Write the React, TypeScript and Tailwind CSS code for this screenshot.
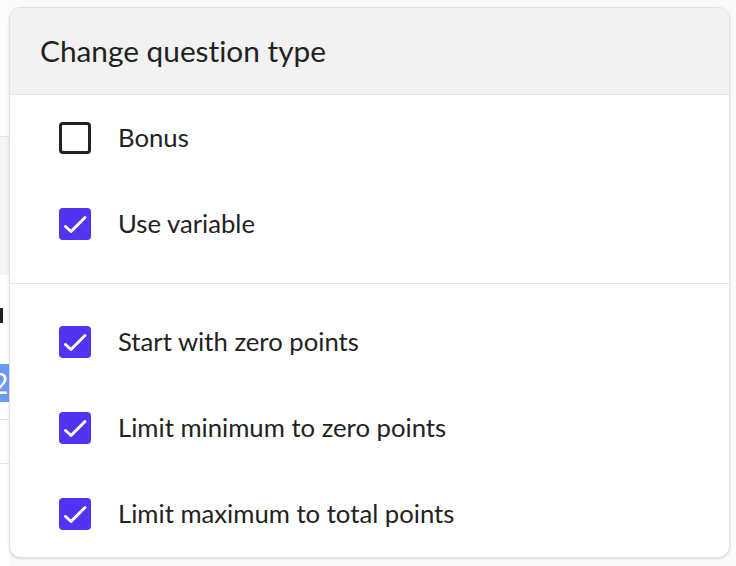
const options = [
  { label: "Bonus", checked: false },
  { label: "Use variable", checked: true },
];

const scoring = [
  { label: "Start with zero points", checked: true },
  { label: "Limit minimum to zero points", checked: true },
  { label: "Limit maximum to total points", checked: true },
];

function Checkbox({ checked }: { checked: boolean }) {
  if (!checked) {
    return <span className="w-8 h-8 shrink-0 rounded-[4px] border-[3px] border-[#222222] bg-white" />;
  }
  return (
    <span className="w-8 h-8 shrink-0 rounded-[4px] bg-[#5233f2] flex items-center justify-center">
      <svg width="32" height="32" viewBox="0 0 32 32" fill="none">
        <path d="M6.5 18.5L12 23.5L26 9.5" stroke="white" strokeWidth="3" strokeLinecap="round" strokeLinejoin="round" />
      </svg>
    </span>
  );
}

function Row({ label, checked }: { label: string; checked: boolean }) {
  return (
    <div className="h-[86px] flex items-center gap-[27px] pl-[49px]">
      <Checkbox checked={checked} />
      <span className="text-[25.7px] text-[#222222] leading-none">{label}</span>
    </div>
  );
}

export default function App() {
  return (
    <div className="w-[736px] h-[566px] bg-[#fafafa] flex overflow-hidden font-['Lato','Noto_Sans',sans-serif] [font-variant-ligatures:none]">
      {/* page peeking out behind the popover */}
      <div className="w-[9px] shrink-0 flex flex-col">
        <div className="h-[137px] bg-[#fcfcfc] border-b border-[#e4e4e4]" />
        <div className="h-[138px] bg-[#f4f4f4]" />
        <div className="h-[32px] bg-white" />
        <div className="h-[16px] bg-white flex items-center">
          <span className="w-[3px] h-[15px] bg-[#222222]" />
        </div>
        <div className="h-[41px] bg-white" />
        <div className="h-[38px] bg-[#6b9bf5] text-white text-[28px] leading-[38px] -indent-[8px]">2</div>
        <div className="h-[18px] bg-white border-b border-[#e4e4e4]" />
        <div className="h-[44px] bg-white border-b border-[#e4e4e4]" />
        <div className="flex-1 bg-white" />
      </div>

      <div className="mt-[7px] w-[721px] h-[551px] shrink-0 rounded-[12px] border border-[#e2e2e2] bg-white shadow-sm overflow-hidden flex flex-col">
        <div className="h-[87px] shrink-0 bg-[#f2f2f2] border-b border-[#e4e4e4] flex items-center px-[30px]">
          <span className="text-[29.8px] text-[#222222] leading-none">Change question type</span>
        </div>
        <div className="flex flex-col">
          {options.map((o) => (
            <Row key={o.label} {...o} />
          ))}
        </div>
        <div className="mt-[16px] mb-[15px] border-t border-[#e4e4e4]" />
        <div className="flex flex-col">
          {scoring.map((o) => (
            <Row key={o.label} {...o} />
          ))}
        </div>
      </div>
    </div>
  );
}
